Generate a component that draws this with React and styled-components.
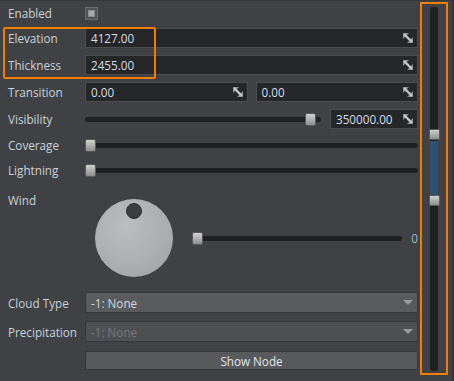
import React from 'react';
import styled, { createGlobalStyle } from 'styled-components';

const Global = createGlobalStyle`
	html, body { margin: 0; padding: 0; background: #404145; }
	body { font-family: "Open Sans", "DejaVu Sans", sans-serif; font-size: 11.7px; }
`;

const Page = styled.div`
	width: 454px;
	height: 381px;
	display: flex;
	box-sizing: border-box;
	background: #404145;
	border-top: 1px solid #36373a;
	border-right: 2px solid #333437;
	position: relative;
	overflow: hidden;
`;
const Form = styled.div`
	width: 418px;
	padding-left: 8px;
	box-sizing: border-box;
	display: flex;
	flex-direction: column;
`;
const Row = styled.div`
	display: flex;
	align-items: center;
	height: ${ p => p.$h || 20 }px;
	margin-top: ${ p => p.$mt || 0 }px;
`;
const Label = styled.div`
	width: 77px;
	flex: none;
	color: #c9d1d9;
	align-self: ${ p => p.$top ? 'flex-start' : 'center' };
	margin-top: ${ p => p.$top ? 3 : 0 }px;
`;
const Check = styled.div`
	width: 13px;
	height: 13px;
	box-sizing: border-box;
	border: 1px solid #6a6b70;
	background: #505155;
	display: grid;
	place-items: center;
	&::after {
		content: '';
		width: 7px;
		height: 7px;
		background: #a7a8ac;
		border: 1px solid #8a8b8f;
		box-sizing: border-box;
	}
`;
const Field = styled.div`
	flex: 1;
	margin-left: ${ p => p.$ml || 0 }px;
	height: 20px;
	box-sizing: border-box;
	background: #252628;
	border: 1px solid #4b4c50;
	display: flex;
	align-items: center;
	justify-content: space-between;
	padding: 0 4px 0 5px;
	color: #d5dde6;
`;
const Track = styled.div`
	flex: ${ p => p.$w ? 'none' : 1 };
	width: ${ p => p.$w ? p.$w + 'px' : 'auto' };
	margin-left: ${ p => p.$ml || 0 }px;
	height: 5px;
	background: #1f2022;
	border-radius: 3px;
	position: relative;
`;
const Thumb = styled.div`
	position: absolute;
	top: -4px;
	width: 11px;
	height: 13px;
	border-radius: 2px;
	background: linear-gradient(#d0d0d0, #8e8e8e);
	border: 1px solid #5a5a5a;
	box-sizing: border-box;
`;
const WindArea = styled.div`
	display: flex;
	align-items: center;
	flex: 1;
	height: 86px;
	align-self: flex-start;
	margin-top: 6px;
`;
const Knob = styled.div`
	width: 78px;
	height: 78px;
	border-radius: 50%;
	background: radial-gradient(circle at 40% 35%, #bcbdc1 0%, #acadb1 60%, #9e9fa3 100%);
	margin-left: 10px;
	position: relative;
	flex: none;
	&::after {
		content: '';
		position: absolute;
		left: 31px;
		top: 4px;
		width: 16px;
		height: 16px;
		border-radius: 50%;
		background: #3c3d41;
		box-sizing: border-box;
		border: 1px solid #2c2d30;
	}
`;
const WindValue = styled.span`
	color: #9fb4cc;
	margin-left: 9px;
`;
const Combo = styled.div`
	flex: 1;
	height: 21px;
	box-sizing: border-box;
	background: ${ p => p.$disabled ? '#4e4f53' : '#5a5b5f' };
	border: 1px solid #36373a;
	border-radius: 2px;
	display: flex;
	align-items: center;
	justify-content: space-between;
	padding: 0 4px 0 5px;
	color: ${ p => p.$disabled ? '#76777c' : '#d3d8de' };
`;
const Arrow = styled.div`
	width: 0;
	height: 0;
	border-left: 5px solid transparent;
	border-right: 5px solid transparent;
	border-top: 5px solid #9a9ba0;
`;
const Button = styled.div`
	flex: 1;
	height: 19px;
	box-sizing: border-box;
	background: #58595d;
	border: 1px solid #36373a;
	border-radius: 2px;
	display: grid;
	place-items: center;
	color: #e2e5e9;
`;
const Highlight = styled.div`
	position: absolute;
	left: 3px;
	top: 26px;
	width: 153px;
	height: 52px;
	box-sizing: border-box;
	border: 2px solid #f07d00;
	border-radius: 2px;
	pointer-events: none;
`;
const SliderColumn = styled.div`
	margin: 1px 0 0 2px;
	width: 28px;
	height: 373px;
	box-sizing: border-box;
	border: 2px solid #f07d00;
	display: flex;
	justify-content: center;
	padding-top: 3px;
`;
const VTrack = styled.div`
	width: 8px;
	height: 364px;
	border-radius: 3px;
	background: #1f2022;
	position: relative;
	margin-left: -1px;
`;
const VRange = styled.div`
	position: absolute;
	left: 0;
	right: 0;
	top: 134px;
	height: 55px;
	background: #2b5272;
`;
const VThumb = styled.div`
	position: absolute;
	left: -1px;
	top: ${ p => p.$top }px;
	width: 11px;
	height: 11px;
	box-sizing: border-box;
	border-radius: 1px;
	background: linear-gradient(#d0d0d0, #8e8e8e);
	border: 1px solid #5a5a5a;
`;

const ResizeIcon = () =>
	<svg width="10" height="10" viewBox="0 0 10 10">
		<polygon points="0,0 6,0 0,6" fill="#8e8f94" />
		<polygon points="10,10 4,10 10,4" fill="#8e8f94" />
		<line x1="1" y1="1" x2="9" y2="9" stroke="#c4c5c9" strokeWidth="2.4" />
	</svg>;

const App = () =>
{
	return (
		<>
			<Global />
			<Page>
				<Form>
					<Row $mt={ 2 }>
						<Label>Enabled</Label>
						<Check />
					</Row>
					<Row $mt={ 5 }>
						<Label>Elevation</Label>
						<Field>4127.00<ResizeIcon /></Field>
					</Row>
					<Row $mt={ 7 }>
						<Label>Thickness</Label>
						<Field>2455.00<ResizeIcon /></Field>
					</Row>
					<Row $mt={ 7 }>
						<Label>Transition</Label>
						<Field>0.00<ResizeIcon /></Field>
						<Field $ml={ 8 }>0.00<ResizeIcon /></Field>
					</Row>
					<Row $mt={ 7 }>
						<Label>Visibility</Label>
						<Track $w={ 236 }><Thumb style={{ left: 220 }} /></Track>
						<Field $ml={ 9 }>350000.00<ResizeIcon /></Field>
					</Row>
					<Row $mt={ 6 }>
						<Label>Coverage</Label>
						<Track><Thumb style={{ left: 0 }} /></Track>
					</Row>
					<Row $mt={ 5 }>
						<Label>Lightning</Label>
						<Track><Thumb style={{ left: 0 }} /></Track>
					</Row>
					<Row $h={ 96 } $mt={ 9 }>
						<Label $top>Wind</Label>
						<WindArea>
							<Knob />
							<Track $ml={ 19 }><Thumb style={{ left: 0 }} /></Track>
							<WindValue>0</WindValue>
						</WindArea>
					</Row>
					<Row $h={ 21 } $mt={ 7 }>
						<Label>Cloud Type</Label>
						<Combo>-1: None<Arrow /></Combo>
					</Row>
					<Row $h={ 21 } $mt={ 8 }>
						<Label>Precipitation</Label>
						<Combo $disabled>-1: None<Arrow /></Combo>
					</Row>
					<Row $h={ 19 } $mt={ 9 }>
						<Label />
						<Button>Show Node</Button>
					</Row>
				</Form>
				<SliderColumn>
					<VTrack>
						<VRange />
						<VThumb $top={ 122 } />
						<VThumb $top={ 188 } />
					</VTrack>
				</SliderColumn>
				<Highlight />
			</Page>
		</>
	);
};

export default App;
